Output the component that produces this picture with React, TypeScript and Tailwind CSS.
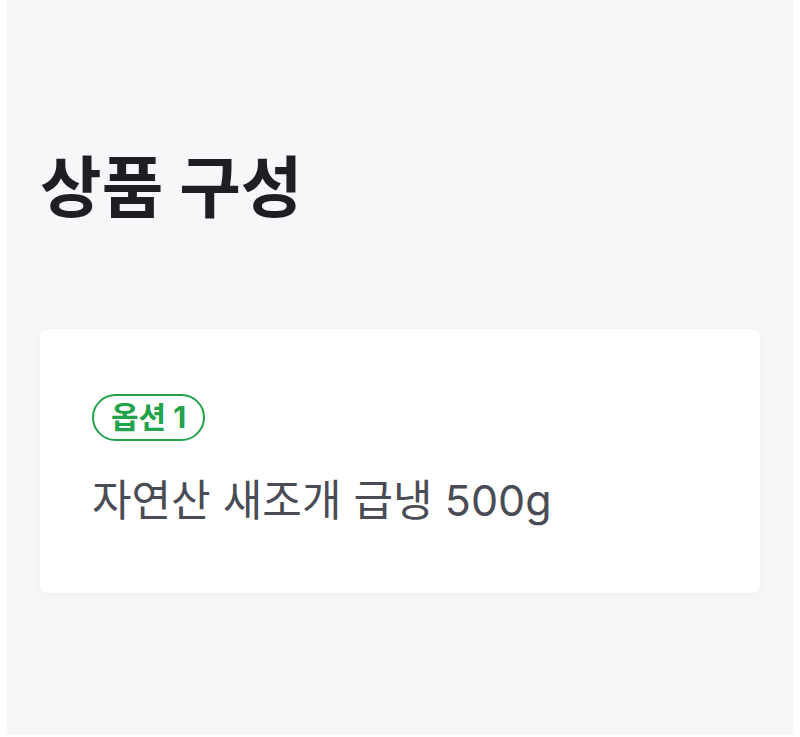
export default function App() {
  return (
    <div className="min-h-screen bg-white" style={{ fontFamily: 'Inter, "Noto Sans CJK KR", sans-serif' }}>
      <div className="mx-[7px] h-[735px] bg-[#f7f7f9] px-[33px] pt-[138px]">
        <h1 className="text-[67px] font-bold leading-[1.5] text-[#1e1f24]">상품 구성</h1>
        <div className="mt-[90px] rounded-lg bg-white px-[52px] pt-[65px] pb-[65px] shadow-[0_2px_8px_rgba(0,0,0,0.04)]">
          <span className="inline-flex h-[47px] items-center rounded-full border-2 border-[#22a24a] px-[17px] text-[30px] font-bold text-[#22a24a]">
            옵션 1
          </span>
          <p className="mt-[32px] text-[43px] leading-[1.3] text-[#4a4c55]">자연산 새조개 급냉 500g</p>
        </div>
      </div>
    </div>
  );
}
